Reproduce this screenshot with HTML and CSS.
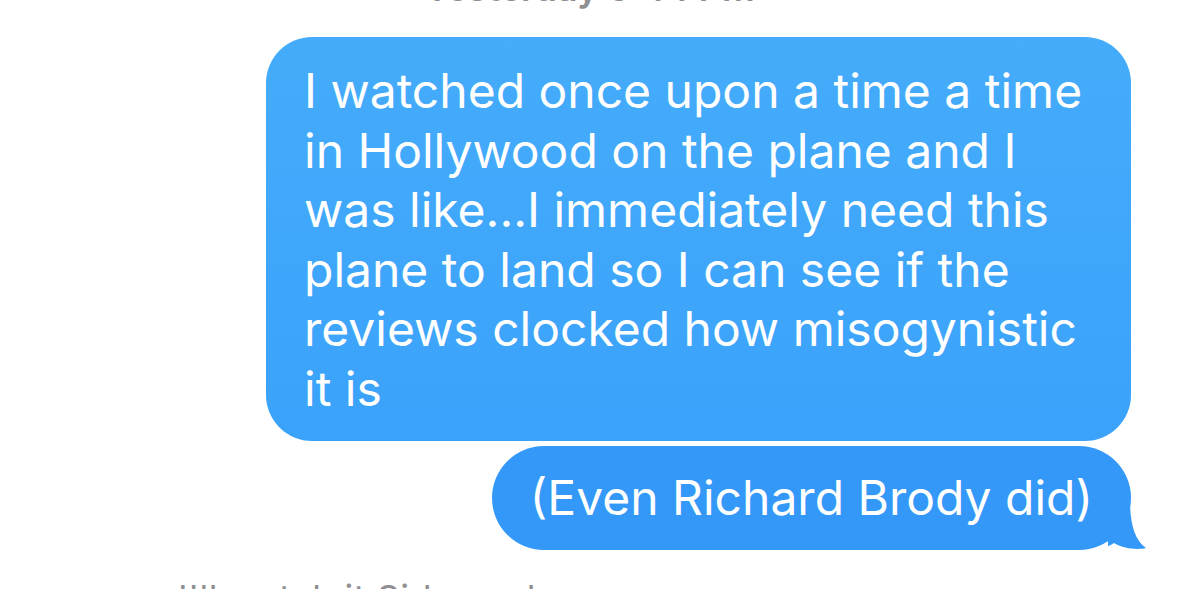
FILE: index.html
```html
<!DOCTYPE html>
<html lang="en">
<head>
<meta charset="UTF-8">
<title>Messages</title>
<link rel="stylesheet" href="styles.css">
</head>
<body>
<div class="thread">
    <div class="stamp">Yesterday 5:44 PM</div>

    <div class="bubble big">I watched once upon a time a time<br>in Hollywood on the plane and I<br>was like...I immediately need this<br>plane to land so I can see if the<br>reviews clocked how misogynistic<br>it is</div>

    <div class="bubble small">
        (Even Richard Brody did)
        <svg class="tail" width="40" height="50" viewBox="0 0 40 50">
            <path d="M0 0 L22 0 C22 22 26 40 38 48 C30 50 16 49 6 43 C3 45 1 46 0 46 Z" fill="#3398f8"/>
        </svg>
    </div>

    <div class="note">I'll watch it Sidney also</div>
</div>
</body>
</html>
```
FILE: styles.css
```css
body {
    margin: 0;
    height: 589px;
    overflow: hidden;
    background: #ffffff;
    font-family: Inter, "Liberation Sans", sans-serif;
}

.thread {
    display: flex;
    flex-direction: column;
    align-items: flex-end;
    padding-right: 48px;
}

.stamp {
    align-self: stretch;
    text-align: center;
    margin-top: -34px;
    padding-left: 48px;
    height: 71px;
    font-size: 36px;
    font-weight: 600;
    color: #8e8e93;
}

.bubble {
    position: relative;
    color: #ffffff;
    font-size: 48px;
    line-height: 59.5px;
    border-radius: 46px;
}

.big {
    width: 865px;
    box-sizing: border-box;
    padding: 24px 20px 23px 38px;
    background: linear-gradient(#45acfb, #3aa2fa);
}

.small {
    margin-top: 5px;
    padding: 22px 38px 22px 38px;
    background: #3398f8;
    border-radius: 52px;
}

.tail {
    position: absolute;
    right: -17px;
    bottom: 0;
}

.note {
    align-self: flex-start;
    margin-top: 26px;
    padding-left: 178px;
    font-size: 36px;
    letter-spacing: 0.5px;
    color: #8e8e93;
}
```
